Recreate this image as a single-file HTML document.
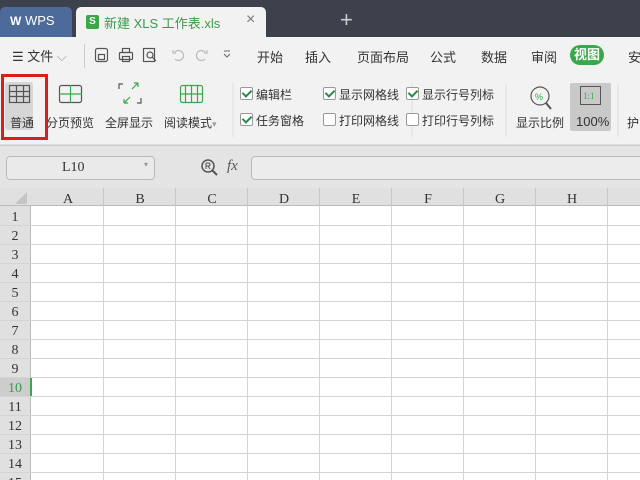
<!DOCTYPE html>
<html><head><meta charset="utf-8"><style>
*{margin:0;padding:0;box-sizing:border-box}
body{width:640px;height:480px;overflow:hidden;background:#fff;font-family:"Liberation Sans","Noto Sans CJK SC",sans-serif;font-size:12px;color:#333;position:relative}
.a{position:absolute}
.t{white-space:nowrap}
.cb{position:absolute;width:13px;height:13px;border:1px solid #999;background:#fff;border-radius:2px}
.cb.on::after{content:"";position:absolute;left:3px;top:0px;width:4px;height:7px;border:solid #2a8a4a;border-width:0 2px 2px 0;transform:rotate(45deg)}
.ser{font-family:"Liberation Serif","Noto Serif CJK SC",serif;font-size:14px;color:#333}
</style></head><body>
<div class="a" style="left:0;top:0;width:640px;height:37px;background:#3d414c"></div>
<div class="a" style="left:0;top:7px;width:72px;height:30px;background:#4c6a9a;border-radius:5px 5px 0 0"></div>
<div class="a t" style="left:10px;top:13px;color:#fff;font-size:13px"><b style="font-size:12px">W</b> WPS</div>
<div class="a" style="left:76px;top:7px;width:190px;height:30px;background:#f2f2f2;border-radius:5px 5px 0 0"></div>
<div class="a" style="left:86px;top:15px;width:13px;height:14px;background:#3aa84a;border-radius:2px;color:#fff;font-size:10px;line-height:14px;text-align:center;font-weight:bold">S</div>
<div class="a t" style="left:104px;top:13px;color:#3a9a4a;font-size:13px">新建 XLS 工作表.xls</div>
<div class="a t" style="left:246px;top:11px;color:#777;font-size:16px">×</div>
<div class="a t" style="left:340px;top:7px;color:#ccc;font-size:22px">+</div>
<div class="a" style="left:0;top:37px;width:640px;height:38px;background:#f2f2f2"></div>
<div class="a t" style="left:12px;top:46px;font-size:13px">☰ 文件 <span style="color:#999">⌵</span></div>
<div class="a" style="left:84px;top:44px;width:1px;height:24px;background:#ccc"></div>
<svg class="a" style="left:90px;top:44px" width="150" height="24">
<g fill="none" stroke="#555" stroke-width="1.2"><rect x="5.5" y="4.5" width="12" height="13" rx="2"/><rect x="8.5" y="10.5" width="6" height="5"/>
<rect x="29.5" y="8.5" width="13" height="7" rx="1"/><rect x="32.5" y="4.5" width="7" height="4"/><rect x="32.5" y="12.5" width="7" height="5"/>
<rect x="53.5" y="4.5" width="11" height="13"/><circle cx="60" cy="11" r="3"/><path d="M62 13l4 4"/></g>
<g fill="none" stroke="#bbb" stroke-width="1.2"><path d="M85 8a5 5 0 1 1 0 7M83 6v3h3"/><path d="M115 8a5 5 0 1 0 0 7M117 6v3h-3"/></g>
<path d="M134 10l3 3 3-3M134 7h6" fill="none" stroke="#666"/>
</svg>
<div class="a t" style="left:257px;top:47px;font-size:13px;color:#333">开始</div>
<div class="a t" style="left:305px;top:47px;font-size:13px">插入</div>
<div class="a t" style="left:357px;top:47px;font-size:13px">页面布局</div>
<div class="a t" style="left:430px;top:47px;font-size:13px">公式</div>
<div class="a t" style="left:481px;top:47px;font-size:13px">数据</div>
<div class="a t" style="left:531px;top:47px;font-size:13px">审阅</div>
<div class="a t" style="left:570px;top:45px;width:34px;height:20px;background:#3aa84a;border-radius:10px;color:#fff;font-size:13px;text-align:center;line-height:20px;font-weight:bold">视图</div>
<div class="a t" style="left:628px;top:47px;font-size:13px">安</div>
<div class="a" style="left:0;top:75px;width:640px;height:70px;background:#f2f2f2;border-bottom:1px solid #ddd"></div>
<div class="a" style="left:5px;top:82px;width:28px;height:48px;background:#d6d6d6;border-radius:3px"></div>
<svg class="a" style="left:0;top:75px" width="640" height="70">
<g fill="none" stroke="#555" stroke-width="1.2"><rect x="9.5" y="10.5" width="20" height="17"/><path d="M9 16.5h21M9 21.5h21M16.5 10v18M23.5 10v18"/></g>
<g fill="none" stroke="#555" stroke-width="1.2"><rect x="59.5" y="10.5" width="22" height="17" rx="2"/></g><path d="M70.5 10v18M59 19h23" stroke="#3aa84a" stroke-width="1.2"/>
<g fill="none" stroke="#3aa84a" stroke-width="1.2"><path d="M132 14l6-6M138 8h-4M138 8v4M124 28l6-6M124 28h4M124 28v-4"/></g><g fill="none" stroke="#555" stroke-width="1.2"><path d="M119 14v-5h4M141 23v5h-4"/></g>
<g fill="none" stroke="#3aa84a" stroke-width="1.2"><rect x="180.5" y="10.5" width="22" height="17" rx="2"/><path d="M180 19h23M191.5 10v18M185.5 10v18M197.5 10v18"/></g>
<line x1="233" y1="8" x2="233" y2="62" stroke="#ddd"/>
<line x1="412" y1="8" x2="412" y2="62" stroke="#ddd"/>
<line x1="506" y1="8" x2="506" y2="62" stroke="#ddd"/>
<circle cx="540" cy="21" r="9" fill="none" stroke="#555" stroke-width="1.2"/><path d="M546 28l5 6" stroke="#555" stroke-width="2"/>
<text x="535" y="25" font-size="9" fill="#3aa84a">%</text>
<rect x="570" y="8" width="41" height="48" fill="#c9c9c9" rx="2"/>
<rect x="580.5" y="11.5" width="20" height="18" fill="none" stroke="#555"/>
<text x="583" y="24" font-size="9" fill="#3aa84a" font-family="Liberation Serif">1:1</text>
<line x1="618" y1="8" x2="618" y2="62" stroke="#ddd"/>
</svg>
<div class="a t" style="left:10px;top:114px">普通</div>
<div class="a t" style="left:46px;top:114px">分页预览</div>
<div class="a t" style="left:105px;top:114px">全屏显示</div>
<div class="a t" style="left:164px;top:114px">阅读模式<span style="color:#999;font-size:9px">▾</span></div>
<div class="a" style="left:1px;top:74px;width:47px;height:66px;border:3px solid #d81e1e"></div>
<div class="cb on" style="left:240px;top:87px"></div><div class="a t" style="left:256px;top:86px">编辑栏</div>
<div class="cb on" style="left:240px;top:113px"></div><div class="a t" style="left:256px;top:112px">任务窗格</div>
<div class="cb on" style="left:323px;top:87px"></div><div class="a t" style="left:339px;top:86px">显示网格线</div>
<div class="cb" style="left:323px;top:113px"></div><div class="a t" style="left:339px;top:112px">打印网格线</div>
<div class="cb on" style="left:406px;top:87px"></div><div class="a t" style="left:422px;top:86px">显示行号列标</div>
<div class="cb" style="left:406px;top:113px"></div><div class="a t" style="left:422px;top:112px">打印行号列标</div>
<div class="a t" style="left:516px;top:114px">显示比例</div>
<div class="a t" style="left:576px;top:114px;font-size:13px">100%</div>
<div class="a t" style="left:627px;top:114px">护</div>
<div class="a" style="left:0;top:145px;width:640px;height:43px;background:#e4e4e4;border-top:1px solid #ccc"></div>
<div class="a" style="left:6px;top:156px;width:149px;height:24px;background:#eaeaea;border:1px solid #bbb;border-radius:4px"></div>
<div class="a ser" style="left:62px;top:160px">L10</div>
<div class="a" style="left:144px;top:160px;color:#999;font-size:8px">▾</div>
<svg class="a" style="left:200px;top:158px" width="20" height="20"><circle cx="8" cy="8" r="6" fill="none" stroke="#555" stroke-width="1.5"/><path d="M12 12l5 5" stroke="#555" stroke-width="2"/><path d="M6 5v6M6 5h2.5a1.5 1.5 0 0 1 0 3H6M8 8l2 3" fill="none" stroke="#555"/></svg>
<div class="a t" style="left:227px;top:158px;font-size:15px;font-style:italic;color:#555;font-family:'Liberation Serif',serif">fx</div>
<div class="a" style="left:251px;top:156px;width:400px;height:24px;background:#ececec;border:1px solid #bbb;border-radius:4px"></div>
<div class="a" style="left:0;top:188px;width:640px;height:18px;background:#e0e0e0;border-bottom:1px solid #bbb"></div>
<div class="a" style="left:0;top:206px;width:31px;height:274px;background:#e0e0e0;border-right:1px solid #bbb"></div>
<div class="a" style="left:0;top:377px;width:31px;height:19px;background:#cdcdcd"></div>
<div class="a" style="left:30px;top:378px;width:2px;height:18px;background:#3aa84a"></div>
<svg class="a" style="left:0;top:188px" width="640" height="292">
<g stroke="#d4d4d4">
<line x1="103.5" y1="18" x2="103.5" y2="292"/><line x1="175.5" y1="18" x2="175.5" y2="292"/><line x1="247.5" y1="18" x2="247.5" y2="292"/><line x1="319.5" y1="18" x2="319.5" y2="292"/><line x1="391.5" y1="18" x2="391.5" y2="292"/><line x1="463.5" y1="18" x2="463.5" y2="292"/><line x1="535.5" y1="18" x2="535.5" y2="292"/><line x1="607.5" y1="18" x2="607.5" y2="292"/>
</g>
<g stroke="#c8c8c8"><line x1="103.5" y1="0" x2="103.5" y2="18"/><line x1="175.5" y1="0" x2="175.5" y2="18"/><line x1="247.5" y1="0" x2="247.5" y2="18"/><line x1="319.5" y1="0" x2="319.5" y2="18"/><line x1="391.5" y1="0" x2="391.5" y2="18"/><line x1="463.5" y1="0" x2="463.5" y2="18"/><line x1="535.5" y1="0" x2="535.5" y2="18"/><line x1="607.5" y1="0" x2="607.5" y2="18"/></g>
<g stroke="#d4d4d4">
<line x1="0" y1="37.5" x2="640" y2="37.5"/><line x1="0" y1="56.5" x2="640" y2="56.5"/><line x1="0" y1="75.5" x2="640" y2="75.5"/><line x1="0" y1="94.5" x2="640" y2="94.5"/><line x1="0" y1="113.5" x2="640" y2="113.5"/><line x1="0" y1="132.5" x2="640" y2="132.5"/><line x1="0" y1="151.5" x2="640" y2="151.5"/><line x1="0" y1="170.5" x2="640" y2="170.5"/><line x1="0" y1="189.5" x2="640" y2="189.5"/><line x1="0" y1="208.5" x2="640" y2="208.5"/><line x1="0" y1="227.5" x2="640" y2="227.5"/><line x1="0" y1="246.5" x2="640" y2="246.5"/><line x1="0" y1="265.5" x2="640" y2="265.5"/><line x1="0" y1="284.5" x2="640" y2="284.5"/>
</g>
<path d="M27 4v12h-12z" fill="#c4c4c4"/>
<g font-family="Liberation Serif,serif" font-size="14" fill="#333" text-anchor="middle">
<text x="68" y="15">A</text><text x="140" y="15">B</text><text x="212" y="15">C</text><text x="284" y="15">D</text><text x="356" y="15">E</text><text x="428" y="15">F</text><text x="500" y="15">G</text><text x="572" y="15">H</text>
<text x="15" y="33">1</text><text x="15" y="52">2</text><text x="15" y="71">3</text><text x="15" y="90">4</text><text x="15" y="109">5</text><text x="15" y="128">6</text><text x="15" y="147">7</text><text x="15" y="166">8</text><text x="15" y="185">9</text><text x="15" y="204" fill="#3a9a4a">10</text><text x="15" y="223">11</text><text x="15" y="242">12</text><text x="15" y="261">13</text><text x="15" y="280">14</text><text x="15" y="299">15</text>
</g>
</svg>
</body></html>
